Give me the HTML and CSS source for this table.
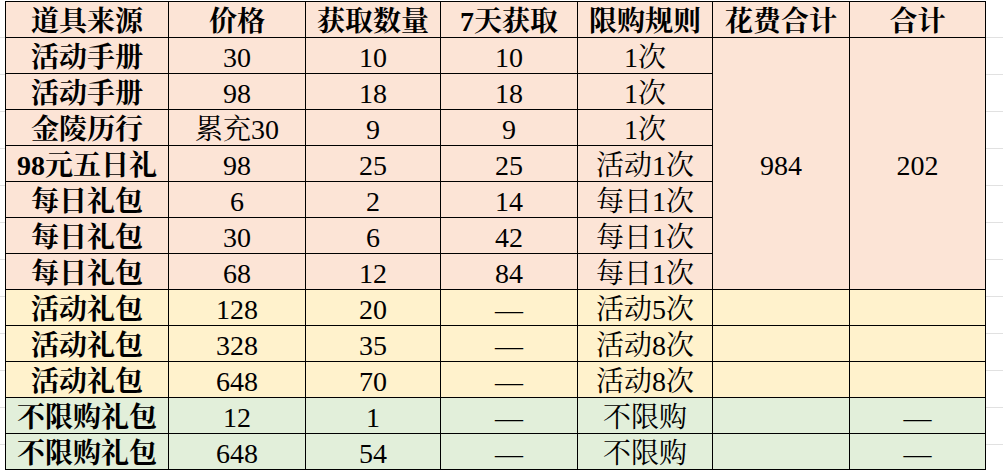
FILE: index.html
```html
<!DOCTYPE html>
<html lang="zh">
<head>
<meta charset="utf-8">
<title>道具来源</title>
<link rel="stylesheet" href="styles.css">
</head>
<body>
<div class="sheet">
<table class="grid">
  <colgroup>
    <col class="c1"><col class="c2"><col class="c3"><col class="c4"><col class="c5"><col class="c6"><col class="c7">
  </colgroup>
  <thead>
    <tr class="peach head">
      <th>道具来源</th><th>价格</th><th>获取数量</th><th>7天获取</th><th>限购规则</th><th>花费合计</th><th>合计</th>
    </tr>
  </thead>
  <tbody>
    <tr class="peach"><td class="name">活动手册</td><td>30</td><td>10</td><td>10</td><td>1次</td><td rowspan="7">984</td><td rowspan="7">202</td></tr>
    <tr class="peach"><td class="name">活动手册</td><td>98</td><td>18</td><td>18</td><td>1次</td></tr>
    <tr class="peach"><td class="name">金陵历行</td><td>累充30</td><td>9</td><td>9</td><td>1次</td></tr>
    <tr class="peach"><td class="name">98元五日礼</td><td>98</td><td>25</td><td>25</td><td>活动1次</td></tr>
    <tr class="peach"><td class="name">每日礼包</td><td>6</td><td>2</td><td>14</td><td>每日1次</td></tr>
    <tr class="peach"><td class="name">每日礼包</td><td>30</td><td>6</td><td>42</td><td>每日1次</td></tr>
    <tr class="peach"><td class="name">每日礼包</td><td>68</td><td>12</td><td>84</td><td>每日1次</td></tr>
    <tr class="yellow"><td class="name">活动礼包</td><td>128</td><td>20</td><td>—</td><td>活动5次</td><td></td><td></td></tr>
    <tr class="yellow"><td class="name">活动礼包</td><td>328</td><td>35</td><td>—</td><td>活动8次</td><td></td><td></td></tr>
    <tr class="yellow"><td class="name">活动礼包</td><td>648</td><td>70</td><td>—</td><td>活动8次</td><td></td><td></td></tr>
    <tr class="green"><td class="name">不限购礼包</td><td>12</td><td>1</td><td>—</td><td>不限购</td><td></td><td>—</td></tr>
    <tr class="green"><td class="name">不限购礼包</td><td>648</td><td>54</td><td>—</td><td>不限购</td><td></td><td>—</td></tr>
  </tbody>
</table>
</div>
</body>
</html>
```

FILE: styles.css
```css
html, body {
  margin: 0;
  padding: 0;
  background: #ffffff;
}

body {
  width: 1003px;
  height: 474px;
  overflow: hidden;
  background-image: repeating-linear-gradient(
    to bottom,
    transparent 0px,
    transparent 36px,
    #e1e1e1 36px,
    #e1e1e1 37px
  );
  background-position: 0 1px;
}

.sheet {
  padding: 1px 0 0 5px;
}

.grid {
  border-collapse: collapse;
  table-layout: fixed;
  width: 980px;
  font-family: "Liberation Serif", "Noto Serif CJK SC", "Noto Sans CJK SC", serif;
  font-size: 28px;
  color: #000;
}

.c1 { width: 163px; }
.c2 { width: 137px; }
.c3 { width: 135px; }
.c4 { width: 137px; }
.c5 { width: 135px; }
.c6 { width: 137px; }
.c7 { width: 136px; }

.grid th,
.grid td {
  border: 1px solid #000;
  height: 30px;
  padding: 5px 0 0;
  text-align: center;
  vertical-align: middle;
  line-height: 30px;
  white-space: nowrap;
  overflow: hidden;
}

.grid th {
  font-weight: bold;
}

.grid td.name {
  font-weight: bold;
}

.peach th,
.peach td { background: #fce4d6; }

.yellow td { background: #fff2cc; }

.green td { background: #e2efda; }
```
